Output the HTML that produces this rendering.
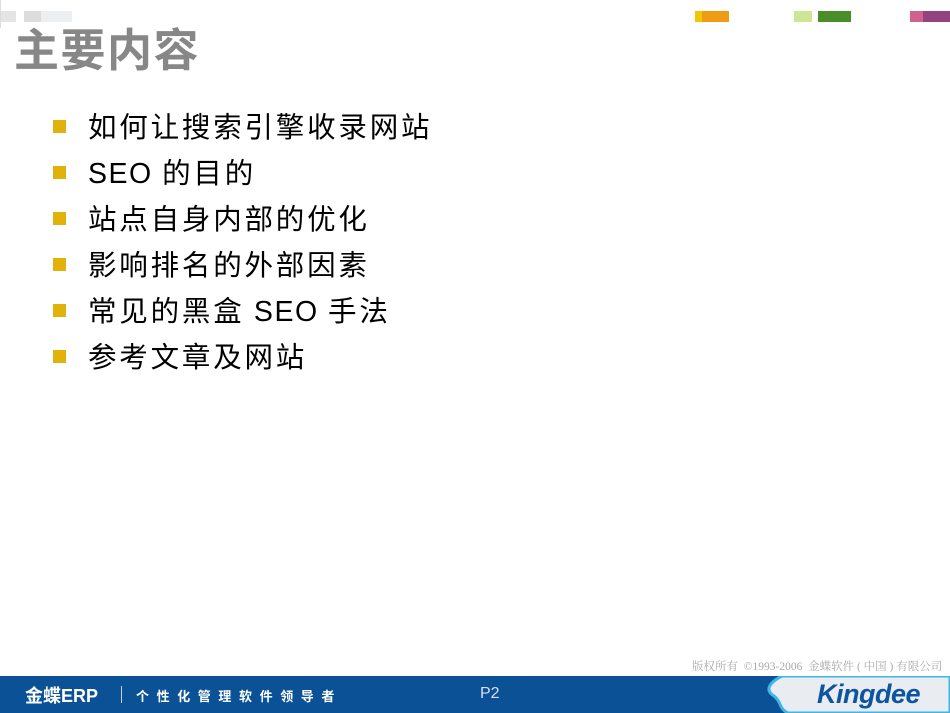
<!DOCTYPE html>
<html><head><meta charset="utf-8"><style>
body{margin:0;width:950px;height:713px;position:relative;background:#fff;overflow:hidden;font-family:"Liberation Sans","Noto Sans CJK SC",sans-serif}
.a{position:absolute}
.t{position:absolute;left:14px;top:23px;font-size:45px;font-weight:bold;color:#878787;line-height:56px;letter-spacing:1.5px}
.li{position:absolute;left:88px;font-size:28.5px;line-height:36px;color:#000;letter-spacing:2.8px;white-space:nowrap}
.li span{letter-spacing:1.5px}
.b{position:absolute;left:53px;width:13px;height:13px;background:#e1b20a}
</style></head><body>
<div class="a" style="left:0;top:11px;width:16px;height:11px;background:#e4e4e4"></div>
<div class="a" style="left:24px;top:11px;width:17px;height:11px;background:#dcdcdc"></div>
<div class="a" style="left:41px;top:11px;width:31px;height:11px;background:#eceff1"></div>
<div class="a" style="left:0;top:0;width:1px;height:28px;background:#ddd"></div>
<div class="a" style="left:695px;top:11px;width:7px;height:11px;background:#f5c400"></div>
<div class="a" style="left:702px;top:11px;width:27px;height:11px;background:#ef9c12"></div>
<div class="a" style="left:794px;top:11px;width:18px;height:11px;background:#cde595"></div>
<div class="a" style="left:818px;top:11px;width:33px;height:11px;background:#4a8e2a"></div>
<div class="a" style="left:910px;top:11px;width:13px;height:11px;background:#d0628f"></div>
<div class="a" style="left:923px;top:11px;width:27px;height:11px;background:#93447f"></div>
<div class="t">主要内容</div>
<div class="b" style="top:120px"></div><div class="li" style="top:110px">如何让搜索引擎收录网站</div>
<div class="b" style="top:166px"></div><div class="li" style="top:156px"><span>SEO </span>的目的</div>
<div class="b" style="top:212px"></div><div class="li" style="top:202px">站点自身内部的优化</div>
<div class="b" style="top:258px"></div><div class="li" style="top:248px">影响排名的外部因素</div>
<div class="b" style="top:304px"></div><div class="li" style="top:294px">常见的黑盒<span> SEO </span>手法</div>
<div class="b" style="top:350px"></div><div class="li" style="top:340px">参考文章及网站</div>
<div class="a" style="left:692px;top:658px;font-size:11.5px;color:#aaa;white-space:nowrap;font-family:'Liberation Serif','Noto Serif CJK SC',serif">版权所有 &nbsp;©1993-2006 &nbsp;金蝶软件 ( 中国 ) 有限公司</div>
<div class="a" style="left:0;top:676px;width:950px;height:37px;background:#0b5196"></div>
<svg class="a" style="left:760px;top:676px" width="190" height="37"><path d="M22 0 C10 6 4 14 14 20 C22 26 18 32 28 37 L190 37 L190 0 Z" fill="#e9edf1" stroke="#3fb5e8" stroke-width="3"/></svg>
<div class="a" style="left:817px;top:679px;font-size:27px;font-weight:bold;font-style:italic;color:#0d55a0;letter-spacing:-0.5px">Kingdee</div>
<div class="a" style="left:25px;top:682px;font-size:18px;font-weight:bold;color:#fff">金蝶ERP</div>
<div class="a" style="left:121px;top:686px;width:1px;height:17px;background:#ccd"></div>
<div class="a" style="left:136px;top:686px;font-size:13px;font-weight:bold;color:#fff;letter-spacing:7.6px">个性化管理软件领导者</div>
<div class="a" style="left:480px;top:685px;font-size:16px;color:#dde">P2</div>
</body></html>
